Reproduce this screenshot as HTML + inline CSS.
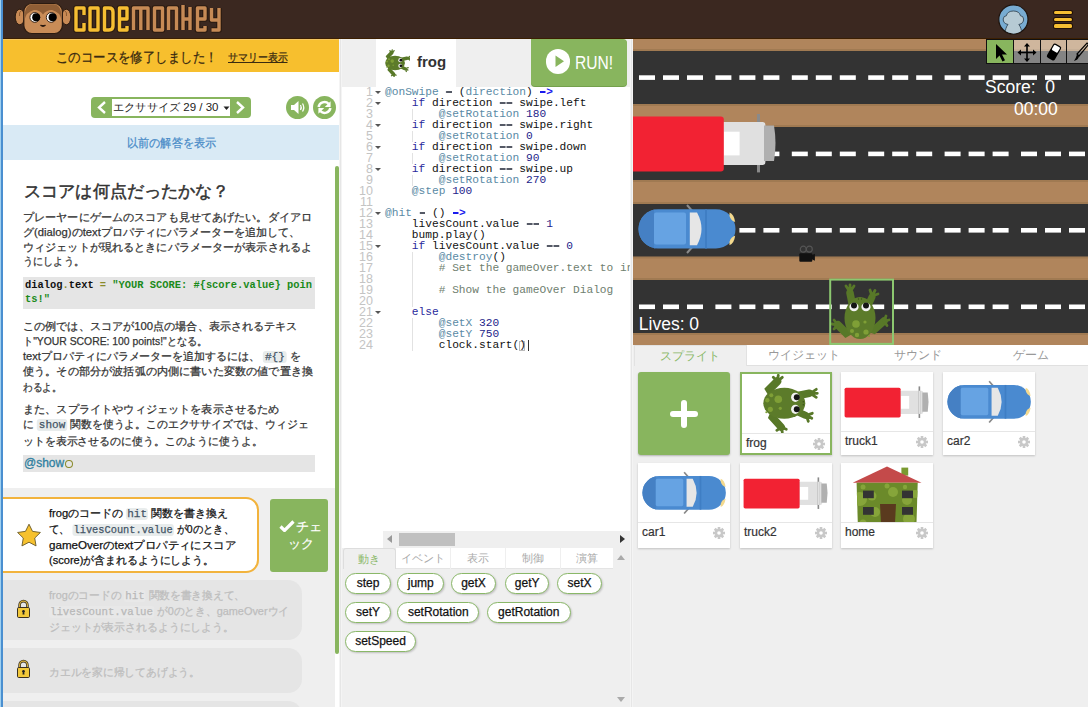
<!DOCTYPE html>
<html><head><meta charset="utf-8">
<style>
*{margin:0;padding:0;box-sizing:border-box}
html,body{width:1088px;height:707px;overflow:hidden;background:#efefef;font-family:"Liberation Sans",sans-serif;position:relative}
.a{position:absolute}
#hdr{left:0;top:0;width:1088px;height:39px;background:#3b2820;border-bottom:1px solid #3c1f02}
/* left panel */
#lp{left:0;top:39px;width:339px;height:668px;background:#fff;overflow:hidden}
#lborder{left:0;top:0;width:3px;height:707px;background:#4a8fd0;border-left:1px solid #9fd0f0;z-index:5}
#banner{left:3px;top:0;width:336px;height:33px;background:#f7bf2e;border-top:1px solid #f4c660;color:#3a2a10;font-size:14px;text-align:center;line-height:33px}
#banner u{font-size:11px;margin-left:8px}
#nav{left:91px;top:58px;width:160px;height:21px;border-radius:4px;background:#88b55e}
#nav .sel{position:absolute;left:21px;top:2px;width:118px;height:17px;background:#fff;font-size:11.3px;line-height:17px;color:#222;padding-left:1px;white-space:nowrap}
.circ{position:absolute;width:23px;height:23px;border-radius:50%;background:#88b55e}
#prev{left:3px;top:86px;width:336px;height:35px;background:#d9eaf5;color:#4a8cc8;font-size:12px;text-align:center;line-height:35px}
#content{left:3px;top:121px;width:332px;height:328px;background:#fff}
.ttl{left:24px;top:142px;font-size:17px;color:#333;white-space:nowrap}
.p{left:24px;width:292px;font-size:11.6px;color:#333;line-height:14.7px}
.cb{left:23px;width:292px;word-break:break-all;background:#e5e5e5;font-family:"Liberation Mono",monospace;font-weight:bold;font-size:10.4px;line-height:14.3px;padding:1px 0 0 2px}
.ic{background:#e8ecec;color:#456;font-family:"Liberation Mono",monospace;border-radius:3px;padding:0 2px}
#tasks{left:3px;top:449px;width:332px;height:219px;background:#efefef}
#scrl{left:335px;top:127px;width:4px;height:541px;background:#fff}
#thumb{left:335px;top:127px;width:4px;height:488px;background:#88b55e;border-radius:2px}
/* dividers */
#d1{left:339px;top:39px;width:3px;height:668px;background:#e6e6e6;border-left:1px solid #f4f4f4;border-right:1px solid #f4f4f4}
#d2{left:630px;top:39px;width:3px;height:668px;background:#e6e6e6;border-left:1px solid #f4f4f4;border-right:1px solid #f4f4f4}
/* middle */
#mp{left:342px;top:39px;width:288px;height:668px;background:#fff;overflow:hidden}
#code{font-family:"Liberation Mono",monospace;font-size:11.2px;line-height:11px;white-space:pre}
.ln{color:#bbb}
/* right */
#rp{left:633px;top:39px;width:455px;height:668px;background:#efefef;overflow:hidden}
#tb{left:353.4px;top:0;width:110px;height:25.4px}
.tbb{position:absolute;top:0;width:27.6px;height:25.4px;background:rgba(255,255,255,0.4);border:1px solid #111}
.tbb svg{position:absolute;left:0;top:0}
.tab{top:306px;height:21.4px;background:#fff;color:#999;font-size:11.5px;text-align:center;line-height:21px;border-bottom:1px solid #e0e0e0}
.card{width:92px;background:#fff;box-shadow:0 1px 2px rgba(0,0,0,.2);overflow:hidden}
.card svg{display:block}
.cl{left:0;width:92px;height:1px;background:#e6e6e6}
.cn{left:4px;font-size:12px;color:#333;line-height:20px;margin-top:-2px;-webkit-text-stroke:0.2px #333}
#run{left:189px;top:0.4px;width:95.8px;height:47px;background:#88b55e;border-radius:0 4px 4px 4px;box-shadow:0 1px 0 #74a04c}
#gut{left:13px;top:48px;width:18px;text-align:right;font-family:"Liberation Sans",sans-serif;font-size:12.5px;line-height:11px;color:#c4c4c4}
.gl{height:11px}
.fold{left:33px;margin-top:52px;width:0;height:0;border-left:3px solid transparent;border-right:3px solid transparent;border-top:3px solid #555}
#code{left:43px;top:48px;font-family:"Liberation Mono",monospace;font-size:11.2px;line-height:11px;white-space:pre;color:#111}
.cl2{height:11px}
.k1{color:#5a8aa5}.kw{color:#2a2a9c}.op{color:transparent;background:linear-gradient(to right,#555a66 0,#555a66 80%,transparent 80%) repeat-x 0.8px 5px/6.72px 2.2px}.ar{color:#1a1aee;font-weight:bold}.dsh{color:transparent;background:linear-gradient(#1a1aee,#1a1aee) no-repeat 1px 5px/5.5px 2.2px}.nm{color:#24248a}.cm{color:#6f806f}
.ptab{top:509px;height:21.4px;background:#fff;color:#aaa;font-size:11px;text-align:center;line-height:21px;border-bottom:1px solid #e4e4e4}
.pill{-webkit-text-stroke:0.25px #111;height:21px;border:1.3px solid #8ab868;border-radius:11px;background:#fff;color:#111;font-size:12px;text-align:center;line-height:18.5px;box-shadow:1px 1px 2px rgba(0,0,0,.2)}
.tk{font-size:11.6px;line-height:15.8px}
.ic2{background:#e8ecec;color:#456;font-family:"Liberation Mono",monospace;font-size:11px;border-radius:3px;padding:0 1px}
.ic3{background:#e8e8e8;color:#b8b8b8;font-family:"Liberation Mono",monospace;font-size:11px;border-radius:3px;padding:0 1px}
.ln2{position:absolute;white-space:nowrap;line-height:16px;font-size:11.2px;color:#333;transform-origin:0 50%;-webkit-text-stroke:0.25px currentColor}
</style></head><body>
<div id="hdr" class="a">
<svg class="a" style="left:13px;top:2px" width="60" height="34" viewBox="13 2 60 34">
<ellipse cx="19.8" cy="17" rx="4.6" ry="7.8" fill="#c88a55" stroke="#2a1a10" stroke-width="1"/>
<ellipse cx="66.3" cy="17" rx="4.6" ry="7.8" fill="#c88a55" stroke="#2a1a10" stroke-width="1"/>
<path d="M19.5,16 Q19,12 21,11 M66.5,16 Q67,12 65,11" stroke="#8a5a30" stroke-width="1" fill="none"/>
<rect x="23.8" y="3.5" width="38.6" height="30" rx="8" fill="#c98c57" stroke="#2a1a10" stroke-width="1.2"/>
<path d="M24.5,20 Q24,5 32,4.2 H54 Q62,5 61.7,20 Q60,12 52,10 Q46,10 43,14.5 Q40,10 34,10 Q26,12 24.5,20Z" fill="#8f5e36"/>
<circle cx="34.8" cy="17.4" r="4.9" fill="#fff" stroke="#2a1a10" stroke-width="0.9"/>
<circle cx="51.2" cy="17.4" r="4.9" fill="#fff" stroke="#2a1a10" stroke-width="0.9"/>
<circle cx="36.2" cy="17.2" r="4" fill="#000"/><circle cx="52.6" cy="17.2" r="4" fill="#000"/>
<path d="M40.5,25 Q43,27.5 45.5,25" stroke="#2a1a10" stroke-width="1.3" fill="#2a1a10"/>
</svg>
<svg class="a" style="left:72px;top:4px" width="152" height="31" viewBox="72 4 152 31">
<g fill="none" stroke-linejoin="round" stroke-linecap="butt">
<g stroke="#2a1a10" stroke-width="5.6">
<path d="M84,15 V8 H76 V30 H84 V23"/>
<path d="M90,8 H98 V30 H90Z"/>
<path d="M104.5,8 H109 Q113,8 113,12 V26 Q113,30 109,30 H104.5Z"/>
<path d="M127,26 V30 H119.5 V8 H127 V19 H120"/>
<path d="M133.5,30 V8 H148 V30 M140.8,8 V30"/>
<path d="M154.5,8 H162.5 V30 H154.5Z"/>
<path d="M168.5,30 V8 H176.5 V30"/>
<path d="M183,5 V30 M183,19 H190 V30 M183,19 H190 V14 V7"/>
<path d="M205,26 V30 H197.5 V8 H205 V19 H198"/>
<path d="M211.5,8 V20 H219 V8 M219,20 V30 H211.5"/>
</g>
<g stroke="#f6be32" stroke-width="3.4">
<path d="M84,15 V8 H76 V30 H84 V23"/>
<path d="M90,8 H98 V30 H90Z"/>
<path d="M104.5,8 H109 Q113,8 113,12 V26 Q113,30 109,30 H104.5Z"/>
<path d="M127,26 V30 H119.5 V8 H127 V19 H120"/>
</g>
<g stroke="#c68a55" stroke-width="3.4">
<path d="M133.5,30 V8 H148 V30 M140.8,8 V30"/>
<path d="M154.5,8 H162.5 V30 H154.5Z"/>
<path d="M168.5,30 V8 H176.5 V30"/>
<path d="M183,5 V30 M183,19 H190 V30 M183,19 H190 V14 V7"/>
<path d="M205,26 V30 H197.5 V8 H205 V19 H198"/>
<path d="M211.5,8 V20 H219 V8 M219,20 V30 H211.5"/>
</g></g>
</svg>
<svg class="a" style="left:998px;top:4px" width="32" height="32" viewBox="998 4 32 32">
<defs><clipPath id="avc"><circle cx="1013.4" cy="19.4" r="14"/></clipPath></defs>
<circle cx="1013.4" cy="19.4" r="14.6" fill="#78acd2" stroke="#1e140e" stroke-width="1.2"/>
<g clip-path="url(#avc)"><path d="M1004.5,36 Q1005.5,27 1008,24.5 Q1003,23.5 1003.2,19 Q1003.5,15.8 1006.3,15.8 Q1007.5,11 1013.4,11 Q1019.3,11 1020.5,15.8 Q1023.3,15.8 1023.6,19 Q1023.8,23.5 1018.8,24.5 Q1021.3,27 1022.3,36Z" fill="#b6cad4" stroke="#2a3a48" stroke-width="0.8"/></g>
</svg>
<div class="a" style="left:1053.5px;top:11px;width:18px;height:3.4px;background:#f6be32;border-radius:1.5px;box-shadow:0 0 0 1px #201008"></div>
<div class="a" style="left:1053.5px;top:17.7px;width:18px;height:3.4px;background:#f6be32;border-radius:1.5px;box-shadow:0 0 0 1px #201008"></div>
<div class="a" style="left:1053.5px;top:24.4px;width:18px;height:3.4px;background:#f6be32;border-radius:1.5px;box-shadow:0 0 0 1px #201008"></div>
</div>
<div id="lborder" class="a"></div>
<div id="lp" class="a">
  <div id="banner" class="a"></div>
  <div id="prev" class="a"></div>
  <div id="nav" class="a"><svg class="a" style="left:4px;top:3px" width="14" height="15" viewBox="0 0 14 15"><path d="M10,2 L4,7.5 L10,13" fill="none" stroke="#fff" stroke-width="2.4"/></svg><div class="sel"><span id="nv" style="display:inline-block;transform-origin:0 50%;white-space:nowrap">エクササイズ 29 / 30</span></div><svg class="a" style="left:132px;top:9px" width="7" height="5"><path d="M0.5,0.5 H6.5 L3.5,4Z" fill="#222"/></svg><svg class="a" style="left:142px;top:3px" width="14" height="15" viewBox="0 0 14 15"><path d="M4,2 L10,7.5 L4,13" fill="none" stroke="#fff" stroke-width="2.4"/></svg></div>
  <div class="circ" style="left:286px;top:57px"><svg width="23" height="23" viewBox="0 0 23 23"><path d="M5,9 H8 L12.5,5 V18 L8,14 H5Z" fill="#fff"/><path d="M14.5,9 Q16,11.5 14.5,14 M16.5,7.5 Q19,11.5 16.5,15.5" fill="none" stroke="#fff" stroke-width="1.3"/></svg></div>
  <div class="circ" style="left:312.6px;top:57px"><svg width="23" height="23" viewBox="0 0 23 23"><path d="M5.6,11 A5.9,5.9 0 0 1 15.6,7.8" fill="none" stroke="#fff" stroke-width="2.5"/><path d="M17.4,12 A5.9,5.9 0 0 1 7.4,15.2" fill="none" stroke="#fff" stroke-width="2.5"/><path d="M17.6,5.2 V11 H11.8Z M5.4,17.8 V12 H11.2Z" fill="#fff"/></svg></div>
  <div class="cb a" style="top:237.8px;height:31.8px"><div class="mono" style="white-space:nowrap"><span style="color:#111">dialog</span><span style="color:#8a8a2a">.</span><span style="color:#111">text </span><span style="color:#8a8a2a">=</span><span style="color:#1a8a1a"> "YOUR SCORE: #{score.value} poin</span></div><div class="mono" style="white-space:nowrap;color:#1a8a1a">ts!"</div></div>
  <div class="cb a" style="top:416px;height:16.5px;font-weight:normal;font-family:'Liberation Sans',sans-serif;font-size:12px;line-height:15px;padding-left:1px"><span style="color:#2f7f9f;-webkit-text-stroke:0.3px #2f7f9f">@show</span><span style="display:inline-block;width:8px;height:8.5px;border:1.6px solid #8a8a2a;border-radius:50%;vertical-align:-1px;margin-left:0.5px"></span></div>

  <div class="a" style="left:3px;top:449px;width:332px;height:219px;background:#efefef"></div>
  <div class="a" style="left:-10px;top:458px;width:269px;height:76.4px;background:#fff;border:2px solid #f2b33d;border-radius:13px"></div>
  <svg class="a" style="left:15.85px;top:484px" width="26" height="26" viewBox="0 0 26 26"><path d="M13.00,1.20 L16.53,8.35 L24.41,9.49 L18.71,15.05 L20.05,22.91 L13.00,19.20 L5.95,22.91 L7.29,15.05 L1.59,9.49 L9.47,8.35Z" fill="#f6c12e" stroke="#6a5a2a" stroke-width="0.9" stroke-linejoin="round"/></svg>
  <div class="a" style="left:270.2px;top:460px;width:58px;height:72.7px;background:#88b55e;border-radius:3px"></div>
  <svg class="a" style="left:279px;top:481px" width="16" height="12" viewBox="0 0 16 12"><path d="M1.5,6.5 L5.5,10.5 L14.5,1.5" fill="none" stroke="#fff" stroke-width="3.2" stroke-linejoin="miter"/></svg>
  <div class="a" style="left:296px;top:480px;color:#fff;font-size:13px;line-height:16px;white-space:nowrap;-webkit-text-stroke:0.2px #fff">チェ</div>
  <div class="a" style="left:288px;top:496.5px;color:#fff;font-size:13px;line-height:16px;white-space:nowrap;-webkit-text-stroke:0.2px #fff">ック</div>
  <div class="a" style="left:-10px;top:541px;width:311.6px;height:60.3px;background:#e5e5e5;border-radius:14px"></div>
  <div class="a" style="left:-10px;top:609px;width:311.6px;height:45.4px;background:#e5e5e5;border-radius:14px"></div>
  <div class="a" style="left:-10px;top:662px;width:311.6px;height:45.4px;background:#e5e5e5;border-radius:14px"></div>
  <svg class="a lock" style="left:16px;top:560px" width="15" height="20" viewBox="0 0 15 20"><path d="M3.6,9 V6 A3.9,3.9 0 0 1 11.4,6 V9" fill="none" stroke="#3a3020" stroke-width="2.6"/><path d="M3.6,9 V6 A3.9,3.9 0 0 1 11.4,6 V9" fill="none" stroke="#d8b040" stroke-width="1.1"/><rect x="1.5" y="8.5" width="12" height="10" rx="1.2" fill="#f2c83a" stroke="#3a3020" stroke-width="1"/><circle cx="7.5" cy="12.3" r="1.3" fill="#222"/><path d="M6.9,12.5 H8.1 L8.5,15.5 H6.5Z" fill="#222"/></svg>
  <svg class="a lock" style="left:16px;top:620px" width="15" height="20" viewBox="0 0 15 20"><path d="M3.6,9 V6 A3.9,3.9 0 0 1 11.4,6 V9" fill="none" stroke="#3a3020" stroke-width="2.6"/><path d="M3.6,9 V6 A3.9,3.9 0 0 1 11.4,6 V9" fill="none" stroke="#d8b040" stroke-width="1.1"/><rect x="1.5" y="8.5" width="12" height="10" rx="1.2" fill="#f2c83a" stroke="#3a3020" stroke-width="1"/><circle cx="7.5" cy="12.3" r="1.3" fill="#222"/><path d="M6.9,12.5 H8.1 L8.5,15.5 H6.5Z" fill="#222"/></svg>

  <div id="scrl" class="a"></div>
  <div id="thumb" class="a"></div>
</div>
<div id="d1" class="a"></div>
<div class="a" style="left:0;top:0;width:335px;height:707px;overflow:hidden">
<div class="ln2" id="t0" style="left:24px;-webkit-text-stroke:0.5px #333;top:183.6px;font-size:17px;color:#333;transform:scaleX(1.007)">スコアは何点だったかな？</div>
<div class="ln2" id="p1a" style="left:22.8px;top:209.3px;transform:scaleX(1.010)">プレーヤーにゲームのスコアも見せてあげたい。ダイアロ</div>
<div class="ln2" id="p1b" style="left:22.8px;top:223.9px;transform:scaleX(1.006)">グ(dialog)のtextプロパティにパラメーターを追加して、</div>
<div class="ln2" id="p1c" style="left:22.8px;top:238.5px;transform:scaleX(1.010)">ウィジェットが現れるときにパラメーターが表示されるよ</div>
<div class="ln2" id="p1d" style="left:22.8px;top:253.2px;transform:scaleX(0.924)">うにしよう。</div>
<div class="ln2" id="p2a" style="left:22.8px;top:317.6px;transform:scaleX(1.011)">この例では、スコアが100点の場合、表示されるテキス</div>
<div class="ln2" id="p2b" style="left:22.8px;top:332.6px;transform:scaleX(0.927)">ト"YOUR SCORE: 100 points!"となる。</div>
<div class="ln2" id="p2c" style="left:22.8px;top:347.7px;transform:scaleX(0.995)">textプロパティにパラメーターを追加するには、 <span class="ic">#{}</span> を</div>
<div class="ln2" id="p2d" style="left:22.8px;top:363.3px;transform:scaleX(1.014)">使う。その部分が波括弧の内側に書いた変数の値で置き換</div>
<div class="ln2" id="p2e" style="left:22.8px;top:378.9px;transform:scaleX(0.875)">わるよ。</div>
<div class="ln2" id="p3a" style="left:22.8px;top:400.6px;transform:scaleX(1.014)">また、スプライトやウィジェットを表示させるため</div>
<div class="ln2" id="p3b" style="left:22.8px;top:416.4px;transform:scaleX(0.984)">に <span class="ic">show</span> 関数を使うよ。このエクササイズでは、ウィジェ</div>
<div class="ln2" id="p3c" style="left:22.8px;top:432.8px;transform:scaleX(0.991)">ットを表示させるのに使う。このように使うよ。</div>
<div class="ln2" id="k1a" style="left:49px;top:505.1px;color:#111;transform:scaleX(0.998)">frogのコードの <span class="ic2">hit</span> 関数を書き換え</div>
<div class="ln2" id="k1b" style="left:49px;top:521.2px;color:#111;transform:scaleX(0.939)">て、 <span class="ic2">livesCount.value</span> が0のとき、</div>
<div class="ln2" id="k1c" style="left:49px;top:537.4px;color:#111;transform:scaleX(1.037)">gameOverのtextプロパティにスコア</div>
<div class="ln2" id="k1d" style="left:49px;top:551.8px;color:#111;transform:scaleX(0.989)">(score)が含まれるようにしよう。</div>
<div class="ln2" id="k2a" style="left:49px;top:587.0px;color:#bdbdbd;transform:scaleX(0.974)">frogのコードの <span class="ic3">hit</span> 関数を書き換えて、</div>
<div class="ln2" id="k2b" style="left:49px;top:602.8px;color:#bdbdbd;transform:scaleX(0.975)"><span class="ic3">livesCount.value</span> が0のとき、gameOverウイ</div>
<div class="ln2" id="k2c" style="left:49px;top:619.2px;color:#bdbdbd;transform:scaleX(0.989)">ジェットが表示されるようにしよう。</div>
<div class="ln2" id="k3a" style="left:49px;top:663.6px;color:#bdbdbd;transform:scaleX(0.981)">カエルを家に帰してあげよう。</div>
<div class="ln2" id="b0" style="left:55.6px;top:49.0px;font-size:14px;color:#3a2a10;transform:scaleX(0.887)">このコースを修了しました！</div>
<div class="ln2" id="b1" style="left:227.5px;top:49.0px;font-size:11px;color:#3a2a10;transform:scaleX(0.902)"><u>サマリー表示</u></div>
<div class="ln2" id="pv" style="left:126.6px;top:135.0px;font-size:12px;color:#4a8cc8;transform:scaleX(0.927)">以前の解答を表示</div>
</div>

<div id="mp" class="a">
<div class="a" style="left:0;top:0;width:288px;height:48px;background:#efefef"></div>
<div class="a" style="left:34px;top:0;width:80px;height:48px;background:#fff"></div>
<svg class="a" style="left:40px;top:9.5px" width="28" height="28" viewBox="-14 -14 28 28"><g transform="rotate(90) scale(0.47)"><g stroke="#587828" stroke-linecap="round" fill="none">
<path d="M-7,-8 L-10,-23" stroke-width="7.5"/><path d="M-10,-24 L-14,-30 M-10,-24 L-10,-31 M-10,-24 L-6,-30" stroke-width="2.8"/>
<path d="M7,-8 L12,-19" stroke-width="7"/><path d="M12,-20 L10,-26 M12,-20 L15,-25.5 M12,-20 L18,-22" stroke-width="2.8"/>
<path d="M-9,14 L-14,17 L-22,9" stroke-width="8"/><path d="M-22,9 L-28,8 M-22,9 L-26,4 M-22,9 L-26,13" stroke-width="2.8"/>
<path d="M9,12 L14,14 L24,5" stroke-width="7.5"/><path d="M24,5 L29,4 M24,5 L27,9.5 M24,5 L26,0" stroke-width="2.8"/>
</g>
<ellipse cx="0" cy="2" rx="15.5" ry="21" fill="#5c7b2a"/>
<circle cx="-4" cy="8" r="3.8" fill="#7f9f36"/><circle cx="6" cy="16" r="2.6" fill="#7f9f36"/><circle cx="-8" cy="15" r="2" fill="#7f9f36"/><circle cx="5" cy="6" r="1.6" fill="#7f9f36"/><circle cx="-3" cy="19" r="2.2" fill="#7f9f36"/><circle cx="9" cy="20" r="1" fill="#7f9f36"/>
<ellipse cx="-6" cy="-9" rx="4.6" ry="4.2" fill="#f2f2f2"/><ellipse cx="6" cy="-9" rx="4.6" ry="4.2" fill="#f2f2f2"/>
<circle cx="-6" cy="-10.5" r="3" fill="#151515"/><circle cx="6" cy="-10.5" r="3" fill="#151515"/>
<circle cx="-1.5" cy="-17" r="0.7" fill="#3a5018"/><circle cx="1.5" cy="-17" r="0.7" fill="#3a5018"/></g></svg>
<div class="a" style="left:75px;top:14px;font-size:15px;font-weight:bold;color:#333">frog</div>
<div id="run" class="a"><div class="a" style="left:14.5px;top:10px;width:24.5px;height:24.5px;border-radius:50%;background:#fff"></div><svg class="a" style="left:14.5px;top:10px" width="25" height="25" viewBox="0 0 25 25"><path d="M9.5,6.5 L18,12.25 L9.5,18Z" fill="#88b55e"/></svg><div class="a" style="left:44px;top:13px;font-size:19px;color:#fff;transform:scaleX(0.82);transform-origin:0 0;white-space:nowrap">RUN!</div></div>
<div class="a" style="left:0;top:48px;width:288px;height:444px;background:#fff"></div>
<div id="gut" class="a"><div class="gl">1</div><div class="gl">2</div><div class="gl">3</div><div class="gl">4</div><div class="gl">5</div><div class="gl">6</div><div class="gl">7</div><div class="gl">8</div><div class="gl">9</div><div class="gl">10</div><div class="gl">11</div><div class="gl">12</div><div class="gl">13</div><div class="gl">14</div><div class="gl">15</div><div class="gl">16</div><div class="gl">17</div><div class="gl">18</div><div class="gl">19</div><div class="gl">20</div><div class="gl">21</div><div class="gl">22</div><div class="gl">23</div><div class="gl">24</div></div>
<div class="fold a" style="top:0px"></div><div class="fold a" style="top:11px"></div><div class="fold a" style="top:33px"></div><div class="fold a" style="top:55px"></div><div class="fold a" style="top:77px"></div><div class="fold a" style="top:121px"></div><div class="fold a" style="top:154px"></div><div class="fold a" style="top:220px"></div>
<div class="a" style="left:69.5px;top:70px;width:1px;height:11px;background:#e2e2e2"></div><div class="a" style="left:69.5px;top:92px;width:1px;height:11px;background:#e2e2e2"></div><div class="a" style="left:69.5px;top:114px;width:1px;height:11px;background:#e2e2e2"></div><div class="a" style="left:69.5px;top:136px;width:1px;height:11px;background:#e2e2e2"></div><div class="a" style="left:69.5px;top:213px;width:1px;height:55px;background:#e2e2e2"></div><div class="a" style="left:69.5px;top:279px;width:1px;height:33px;background:#e2e2e2"></div>
<div class="a" style="left:185.5px;top:301px;width:1px;height:11px;background:#333"></div><div class="a" style="left:176.5px;top:302px;width:6.5px;height:10px;border:1px solid #bbb"></div><div id="code" class="a mono"><div class="cl2"><span class="k1">@onSwipe</span> <span class="op">-</span> (<span class="k1">direction</span>) <span class="ar"><span class="dsh">-</span>&gt;</span></div><div class="cl2">    <span class="kw">if</span> direction <span class="op">--</span> swipe.left</div><div class="cl2">        <span class="k1">@setRotation</span> <span class="nm">180</span></div><div class="cl2">    <span class="kw">if</span> direction <span class="op">--</span> swipe.right</div><div class="cl2">        <span class="k1">@setRotation</span> <span class="nm">0</span></div><div class="cl2">    <span class="kw">if</span> direction <span class="op">--</span> swipe.down</div><div class="cl2">        <span class="k1">@setRotation</span> <span class="nm">90</span></div><div class="cl2">    <span class="kw">if</span> direction <span class="op">--</span> swipe.up</div><div class="cl2">        <span class="k1">@setRotation</span> <span class="nm">270</span></div><div class="cl2">    <span class="k1">@step</span> <span class="nm">100</span></div><div class="cl2"> </div><div class="cl2"><span class="k1">@hit</span> <span class="op">-</span> () <span class="ar"><span class="dsh">-</span>&gt;</span></div><div class="cl2">    livesCount.value <span class="op">--</span> <span class="nm">1</span></div><div class="cl2">    bump.play()</div><div class="cl2">    <span class="kw">if</span> livesCount.value <span class="op">--</span> <span class="nm">0</span></div><div class="cl2">        <span class="k1">@destroy</span>()</div><div class="cl2">        <span class="cm"># Set the gameOver.text to include the score</span></div><div class="cl2"> </div><div class="cl2">        <span class="cm"># Show the gameOver Dialog</span></div><div class="cl2"> </div><div class="cl2">    <span class="kw">else</span></div><div class="cl2">        <span class="k1">@setX</span> <span class="nm">320</span></div><div class="cl2">        <span class="k1">@setY</span> <span class="nm">750</span></div><div class="cl2">        clock.start()</div></div>
<div class="a" style="left:40.5px;top:492px;width:247.5px;height:16.7px;background:#efefef"></div>
<svg class="a" style="left:44px;top:495px" width="8" height="10"><path d="M6,1 L1,5 L6,9Z" fill="#999"/></svg>
<div class="a" style="left:57px;top:494px;width:56px;height:12.6px;background:#c0c0c0"></div>
<svg class="a" style="left:276px;top:495px" width="8" height="10"><path d="M2,1 L7,5 L2,9Z" fill="#333"/></svg>
<div class="a" style="left:0;top:508.7px;width:288px;height:160px;background:#efefef"></div>
<div class="ptab a" style="left:0.8px;width:52.8px;background:#efefef;color:#8ab868;border:1px solid #ddd;border-bottom:none;border-radius:3px 3px 0 0">動き</div>
<div class="ptab a" style="left:53.6px;width:54px">イベント</div>
<div class="ptab a" style="left:108.6px;width:54px">表示</div>
<div class="ptab a" style="left:163.6px;width:54px">制御</div>
<div class="ptab a" style="left:218.6px;width:52.4px">演算</div>
<svg class="a" style="left:274px;top:514px" width="10" height="8"><path d="M1,7 L5,2 L9,7Z" fill="#aaa"/></svg>
<svg class="a" style="left:274px;top:657px" width="10" height="8"><path d="M1,1 L5,6 L9,1Z" fill="#aaa"/></svg>
<div class="pill a" style="left:3.3px;top:534.3px;width:45.5px">step</div><div class="pill a" style="left:55.3px;top:534.3px;width:46.9px">jump</div><div class="pill a" style="left:109.0px;top:534.3px;width:45.0px">getX</div><div class="pill a" style="left:163.3px;top:534.3px;width:43.7px">getY</div><div class="pill a" style="left:215.2px;top:534.3px;width:44.6px">setX</div><div class="pill a" style="left:3.3px;top:563.4px;width:45.4px">setY</div><div class="pill a" style="left:55.3px;top:563.4px;width:82.0px">setRotation</div><div class="pill a" style="left:145.0px;top:563.4px;width:83.6px">getRotation</div><div class="pill a" style="left:3.3px;top:591.6px;width:70.4px">setSpeed</div>
</div>
<div id="d2" class="a"></div>
<div id="rp" class="a">
<svg class="a" style="left:0;top:0" width="455" height="306" viewBox="0 0 455 306">
<rect width="455" height="306" fill="#b0855c"/>
<g fill="#a07a52"><rect y="10" width="455" height="2"/><rect y="65" width="455" height="2"/><rect y="86" width="455" height="2"/><rect y="141" width="455" height="2"/><rect y="163" width="455" height="2"/><rect y="217.5" width="455" height="2"/><rect y="239" width="455" height="2"/><rect y="294" width="455" height="2"/></g><g fill="#333"><rect y="12" width="455" height="53"/><rect y="88" width="455" height="53"/><rect y="165" width="455" height="52.5"/><rect y="241" width="455" height="53"/></g>
<g fill="#fff"><rect x="6.0" y="36.3" width="16" height="4.6"/><rect x="30.0" y="36.3" width="16" height="4.6"/><rect x="54.0" y="36.3" width="16" height="4.6"/><rect x="82.4" y="36.3" width="16" height="4.6"/><rect x="106.4" y="36.3" width="16" height="4.6"/><rect x="130.4" y="36.3" width="16" height="4.6"/><rect x="158.8" y="36.3" width="16" height="4.6"/><rect x="182.8" y="36.3" width="16" height="4.6"/><rect x="206.8" y="36.3" width="16" height="4.6"/><rect x="235.2" y="36.3" width="16" height="4.6"/><rect x="259.2" y="36.3" width="16" height="4.6"/><rect x="283.2" y="36.3" width="16" height="4.6"/><rect x="311.6" y="36.3" width="16" height="4.6"/><rect x="335.6" y="36.3" width="16" height="4.6"/><rect x="359.6" y="36.3" width="16" height="4.6"/><rect x="388.0" y="36.3" width="16" height="4.6"/><rect x="412.0" y="36.3" width="16" height="4.6"/><rect x="436.0" y="36.3" width="16" height="4.6"/><rect x="6.0" y="112.6" width="16" height="4.6"/><rect x="30.0" y="112.6" width="16" height="4.6"/><rect x="54.0" y="112.6" width="16" height="4.6"/><rect x="82.4" y="112.6" width="16" height="4.6"/><rect x="106.4" y="112.6" width="16" height="4.6"/><rect x="130.4" y="112.6" width="16" height="4.6"/><rect x="158.8" y="112.6" width="16" height="4.6"/><rect x="182.8" y="112.6" width="16" height="4.6"/><rect x="206.8" y="112.6" width="16" height="4.6"/><rect x="235.2" y="112.6" width="16" height="4.6"/><rect x="259.2" y="112.6" width="16" height="4.6"/><rect x="283.2" y="112.6" width="16" height="4.6"/><rect x="311.6" y="112.6" width="16" height="4.6"/><rect x="335.6" y="112.6" width="16" height="4.6"/><rect x="359.6" y="112.6" width="16" height="4.6"/><rect x="388.0" y="112.6" width="16" height="4.6"/><rect x="412.0" y="112.6" width="16" height="4.6"/><rect x="436.0" y="112.6" width="16" height="4.6"/><rect x="6.0" y="189" width="16" height="4.6"/><rect x="30.0" y="189" width="16" height="4.6"/><rect x="54.0" y="189" width="16" height="4.6"/><rect x="82.4" y="189" width="16" height="4.6"/><rect x="106.4" y="189" width="16" height="4.6"/><rect x="130.4" y="189" width="16" height="4.6"/><rect x="158.8" y="189" width="16" height="4.6"/><rect x="182.8" y="189" width="16" height="4.6"/><rect x="206.8" y="189" width="16" height="4.6"/><rect x="235.2" y="189" width="16" height="4.6"/><rect x="259.2" y="189" width="16" height="4.6"/><rect x="283.2" y="189" width="16" height="4.6"/><rect x="311.6" y="189" width="16" height="4.6"/><rect x="335.6" y="189" width="16" height="4.6"/><rect x="359.6" y="189" width="16" height="4.6"/><rect x="388.0" y="189" width="16" height="4.6"/><rect x="412.0" y="189" width="16" height="4.6"/><rect x="436.0" y="189" width="16" height="4.6"/><rect x="6.0" y="265.5" width="16" height="4.6"/><rect x="30.0" y="265.5" width="16" height="4.6"/><rect x="54.0" y="265.5" width="16" height="4.6"/><rect x="82.4" y="265.5" width="16" height="4.6"/><rect x="106.4" y="265.5" width="16" height="4.6"/><rect x="130.4" y="265.5" width="16" height="4.6"/><rect x="158.8" y="265.5" width="16" height="4.6"/><rect x="182.8" y="265.5" width="16" height="4.6"/><rect x="206.8" y="265.5" width="16" height="4.6"/><rect x="235.2" y="265.5" width="16" height="4.6"/><rect x="259.2" y="265.5" width="16" height="4.6"/><rect x="283.2" y="265.5" width="16" height="4.6"/><rect x="311.6" y="265.5" width="16" height="4.6"/><rect x="335.6" y="265.5" width="16" height="4.6"/><rect x="359.6" y="265.5" width="16" height="4.6"/><rect x="388.0" y="265.5" width="16" height="4.6"/><rect x="412.0" y="265.5" width="16" height="4.6"/><rect x="436.0" y="265.5" width="16" height="4.6"/></g>
<g transform="translate(0,0) scale(1)">
<rect x="88" y="83" width="44.4" height="43" rx="3" fill="#e0e0e0"/>
<rect x="91" y="92.7" width="15.6" height="23.7" fill="#fff"/>
<rect x="124" y="75" width="3" height="58.4" fill="#8a8a8a"/>
<rect x="124" y="83" width="3" height="43" fill="#e0e0e0"/>
<path d="M131,86.5 H141 Q144,104 141,122 H131Z" fill="#b0b0b0"/>
<rect x="-13" y="77.4" width="103.8" height="55" rx="3" fill="#f22233"/>
</g>
<g transform="translate(0,0) scale(1)">
<path d="M54,166 L61,174 M54,214 L61,206" stroke="#8a8a8a" stroke-width="2"/>
<rect x="5.5" y="170.3" width="97" height="39.2" rx="19.6" fill="#4a8ad0"/>
<path d="M25.1,170.3 A19.6,19.6 0 0 0 25.1,209.5 H21 V170.3Z" fill="#4580c4"/>
<rect x="21" y="173.6" width="32" height="32" rx="2" fill="#66a3e3"/>
<path d="M56.8,173.6 H64 Q73,189.9 64,206.2 H56.8Z" fill="#e6e6e6"/>
<rect x="72" y="170.3" width="2" height="39.2" fill="#3f7ec4"/>
<path d="M96.5,173.5 Q101,175 102.2,183 Q98,182 96.5,177Z" fill="#f3d98e"/>
<path d="M96.5,206.3 Q101,204.8 102.2,196.8 Q98,197.8 96.5,202.8Z" fill="#f3d98e"/>
</g>
<g transform="translate(166.3,207.2)"><circle cx="4" cy="3" r="3" fill="none" stroke="#555" stroke-width="1.2"/><circle cx="10" cy="3" r="3" fill="none" stroke="#555" stroke-width="1.2"/><rect x="0" y="7" width="13" height="8.5" rx="1" fill="#111"/><path d="M12.5,9 L15.6,7.5 V14.5 L12.5,13Z" fill="#111"/></g>
<g transform="translate(227,277) scale(1)"><g stroke="#587828" stroke-linecap="round" fill="none">
<path d="M-7,-8 L-10,-23" stroke-width="7.5"/><path d="M-10,-24 L-14,-30 M-10,-24 L-10,-31 M-10,-24 L-6,-30" stroke-width="2.8"/>
<path d="M7,-8 L12,-19" stroke-width="7"/><path d="M12,-20 L10,-26 M12,-20 L15,-25.5 M12,-20 L18,-22" stroke-width="2.8"/>
<path d="M-9,14 L-14,17 L-22,9" stroke-width="8"/><path d="M-22,9 L-28,8 M-22,9 L-26,4 M-22,9 L-26,13" stroke-width="2.8"/>
<path d="M9,12 L14,14 L24,5" stroke-width="7.5"/><path d="M24,5 L29,4 M24,5 L27,9.5 M24,5 L26,0" stroke-width="2.8"/>
</g>
<ellipse cx="0" cy="2" rx="15.5" ry="21" fill="#5c7b2a"/>
<circle cx="-4" cy="8" r="3.8" fill="#7f9f36"/><circle cx="6" cy="16" r="2.6" fill="#7f9f36"/><circle cx="-8" cy="15" r="2" fill="#7f9f36"/><circle cx="5" cy="6" r="1.6" fill="#7f9f36"/><circle cx="-3" cy="19" r="2.2" fill="#7f9f36"/><circle cx="9" cy="20" r="1" fill="#7f9f36"/>
<ellipse cx="-6" cy="-9" rx="4.6" ry="4.2" fill="#f2f2f2"/><ellipse cx="6" cy="-9" rx="4.6" ry="4.2" fill="#f2f2f2"/>
<circle cx="-6" cy="-10.5" r="3" fill="#151515"/><circle cx="6" cy="-10.5" r="3" fill="#151515"/>
<circle cx="-1.5" cy="-17" r="0.7" fill="#3a5018"/><circle cx="1.5" cy="-17" r="0.7" fill="#3a5018"/></g>
<rect x="197.2" y="240.6" width="62.8" height="64.3" fill="none" stroke="#8cc870" stroke-width="2"/>
<text x="5.8" y="291" font-family="Liberation Sans" font-size="17.5" fill="#fff">Lives:  0</text>
<text x="352" y="54" font-family="Liberation Sans" font-size="17.5" fill="#fff" xml:space="preserve">Score:  0</text>
<text x="381" y="76.3" font-family="Liberation Sans" font-size="17.5" fill="#fff">00:00</text>
</svg>
<div id="tb" class="a">
<div class="tbb" style="left:0;background:#88b55e"><svg width="26" height="24" viewBox="0 0 26 24"><path d="M9,4 L9,19 L12.5,15.5 L15.5,21.5 L18,20.3 L15,14.5 L20,14.5Z" fill="#000"/></svg></div>
<div class="tbb" style="left:26.6px"><svg width="26" height="24" viewBox="0 0 26 24"><g fill="#000"><rect x="12.2" y="5" width="1.6" height="15"/><rect x="5.5" y="11.7" width="15" height="1.6"/><path d="M13,3 L16,6.5 H10Z M13,22 L16,18.5 H10Z M3.5,12.5 L7,9.5 V15.5Z M22.5,12.5 L19,9.5 V15.5Z"/></g></svg></div>
<div class="tbb" style="left:53.2px"><svg width="26" height="24" viewBox="0 0 26 24"><g transform="rotate(30 13 12)"><rect x="8.5" y="4" width="9" height="16" rx="2" fill="#000"/><rect x="9.7" y="5.2" width="6.6" height="6" rx="1" fill="#fff"/></g></svg></div>
<div class="tbb" style="left:79.8px"><svg width="26" height="24" viewBox="0 0 26 24"><path d="M20,3 L21.5,4.5 L12,16 L10,14Z" fill="none" stroke="#000" stroke-width="1.2"/><path d="M10,14.5 L12,16.5 Q11,20 7,21 Q9,18 10,14.5Z" fill="#000"/></svg></div>
</div>
<div class="tab a" style="left:0.8px;width:113px;background:#efefef;color:#8ab868;border:1px solid #e2e2e2;border-bottom:none">スプライト</div>
<div class="tab a" style="left:114px;width:113.7px">ウイジェット</div>
<div class="tab a" style="left:227.7px;width:113.7px">サウンド</div>
<div class="tab a" style="left:341.4px;width:113.6px">ゲーム</div>
<div class="a" style="left:5px;top:333px;width:92px;height:83px;background:#88b55e;border-radius:3px;box-shadow:0 1px 2px rgba(0,0,0,.25)"><div class="a" style="left:32px;top:39px;width:28px;height:6px;background:#fff;border-radius:3px"></div><div class="a" style="left:43px;top:28px;width:6px;height:28px;background:#fff;border-radius:3px"></div></div><div class="card a" style="left:107px;top:333px;height:83px;border:2px solid #88b55e;"><svg class="a" style="left:0;top:0" width="92" height="60" viewBox="0 0 92 60"><g transform="translate(44.3,29.3) rotate(90) scale(1.0)"><g stroke="#587828" stroke-linecap="round" fill="none">
<path d="M-7,-8 L-10,-23" stroke-width="7.5"/><path d="M-10,-24 L-14,-30 M-10,-24 L-10,-31 M-10,-24 L-6,-30" stroke-width="2.8"/>
<path d="M7,-8 L12,-19" stroke-width="7"/><path d="M12,-20 L10,-26 M12,-20 L15,-25.5 M12,-20 L18,-22" stroke-width="2.8"/>
<path d="M-9,14 L-14,17 L-22,9" stroke-width="8"/><path d="M-22,9 L-28,8 M-22,9 L-26,4 M-22,9 L-26,13" stroke-width="2.8"/>
<path d="M9,12 L14,14 L24,5" stroke-width="7.5"/><path d="M24,5 L29,4 M24,5 L27,9.5 M24,5 L26,0" stroke-width="2.8"/>
</g>
<ellipse cx="0" cy="2" rx="15.5" ry="21" fill="#5c7b2a"/>
<circle cx="-4" cy="8" r="3.8" fill="#7f9f36"/><circle cx="6" cy="16" r="2.6" fill="#7f9f36"/><circle cx="-8" cy="15" r="2" fill="#7f9f36"/><circle cx="5" cy="6" r="1.6" fill="#7f9f36"/><circle cx="-3" cy="19" r="2.2" fill="#7f9f36"/><circle cx="9" cy="20" r="1" fill="#7f9f36"/>
<ellipse cx="-6" cy="-9" rx="4.6" ry="4.2" fill="#f2f2f2"/><ellipse cx="6" cy="-9" rx="4.6" ry="4.2" fill="#f2f2f2"/>
<circle cx="-6" cy="-10.5" r="3" fill="#151515"/><circle cx="6" cy="-10.5" r="3" fill="#151515"/>
<circle cx="-1.5" cy="-17" r="0.7" fill="#3a5018"/><circle cx="1.5" cy="-17" r="0.7" fill="#3a5018"/></g></svg><div class="cl a" style="top:59px"></div><div class="cn a" style="top:61px">frog</div><div class="a" style="left:71px;top:63.5px"><svg width="12" height="12" viewBox="-6 -6 12 12"><g fill="#c8c8c8"><circle r="4.2"/><rect x="-1.3" y="-6" width="2.6" height="12"/><rect x="-6" y="-1.3" width="12" height="2.6"/><rect x="-1.3" y="-6" width="2.6" height="12" transform="rotate(45)"/><rect x="-1.3" y="-6" width="2.6" height="12" transform="rotate(-45)"/></g><circle r="1.8" fill="#fff"/></svg></div></div><div class="card a" style="left:208px;top:333px;height:83px;"><svg class="a" style="left:0;top:0" width="92" height="60" viewBox="0 0 92 60"><g transform="translate(10.6,-26.1) scale(0.54)">
<rect x="88" y="83" width="44.4" height="43" rx="3" fill="#e0e0e0"/>
<rect x="91" y="92.7" width="15.6" height="23.7" fill="#fff"/>
<rect x="124" y="75" width="3" height="58.4" fill="#8a8a8a"/>
<rect x="124" y="83" width="3" height="43" fill="#e0e0e0"/>
<path d="M131,86.5 H141 Q144,104 141,122 H131Z" fill="#b0b0b0"/>
<rect x="-13" y="77.4" width="103.8" height="55" rx="3" fill="#f22233"/>
</g></svg><div class="cl a" style="top:59px"></div><div class="cn a" style="top:61px">truck1</div><div class="a" style="left:75px;top:63.5px"><svg width="12" height="12" viewBox="-6 -6 12 12"><g fill="#c8c8c8"><circle r="4.2"/><rect x="-1.3" y="-6" width="2.6" height="12"/><rect x="-6" y="-1.3" width="12" height="2.6"/><rect x="-1.3" y="-6" width="2.6" height="12" transform="rotate(45)"/><rect x="-1.3" y="-6" width="2.6" height="12" transform="rotate(-45)"/></g><circle r="1.8" fill="#fff"/></svg></div></div><div class="card a" style="left:310px;top:333px;height:83px;"><svg class="a" style="left:0;top:0" width="92" height="60" viewBox="0 0 92 60"><g transform="translate(-0.3,-133.5) scale(0.86)">
<path d="M54,166 L61,174 M54,214 L61,206" stroke="#8a8a8a" stroke-width="2"/>
<rect x="5.5" y="170.3" width="97" height="39.2" rx="19.6" fill="#4a8ad0"/>
<path d="M25.1,170.3 A19.6,19.6 0 0 0 25.1,209.5 H21 V170.3Z" fill="#4580c4"/>
<rect x="21" y="173.6" width="32" height="32" rx="2" fill="#66a3e3"/>
<path d="M56.8,173.6 H64 Q73,189.9 64,206.2 H56.8Z" fill="#e6e6e6"/>
<rect x="72" y="170.3" width="2" height="39.2" fill="#3f7ec4"/>
<path d="M96.5,173.5 Q101,175 102.2,183 Q98,182 96.5,177Z" fill="#f3d98e"/>
<path d="M96.5,206.3 Q101,204.8 102.2,196.8 Q98,197.8 96.5,202.8Z" fill="#f3d98e"/>
</g></svg><div class="cl a" style="top:59px"></div><div class="cn a" style="top:61px">car2</div><div class="a" style="left:75px;top:63.5px"><svg width="12" height="12" viewBox="-6 -6 12 12"><g fill="#c8c8c8"><circle r="4.2"/><rect x="-1.3" y="-6" width="2.6" height="12"/><rect x="-6" y="-1.3" width="12" height="2.6"/><rect x="-1.3" y="-6" width="2.6" height="12" transform="rotate(45)"/><rect x="-1.3" y="-6" width="2.6" height="12" transform="rotate(-45)"/></g><circle r="1.8" fill="#fff"/></svg></div></div><div class="card a" style="left:5px;top:424px;height:85px;"><svg class="a" style="left:0;top:0" width="92" height="60" viewBox="0 0 92 60"><g transform="translate(-0.3,-133.5) scale(0.86)">
<path d="M54,166 L61,174 M54,214 L61,206" stroke="#8a8a8a" stroke-width="2"/>
<rect x="5.5" y="170.3" width="97" height="39.2" rx="19.6" fill="#4a8ad0"/>
<path d="M25.1,170.3 A19.6,19.6 0 0 0 25.1,209.5 H21 V170.3Z" fill="#4580c4"/>
<rect x="21" y="173.6" width="32" height="32" rx="2" fill="#66a3e3"/>
<path d="M56.8,173.6 H64 Q73,189.9 64,206.2 H56.8Z" fill="#e6e6e6"/>
<rect x="72" y="170.3" width="2" height="39.2" fill="#3f7ec4"/>
<path d="M96.5,173.5 Q101,175 102.2,183 Q98,182 96.5,177Z" fill="#f3d98e"/>
<path d="M96.5,206.3 Q101,204.8 102.2,196.8 Q98,197.8 96.5,202.8Z" fill="#f3d98e"/>
</g></svg><div class="cl a" style="top:59px"></div><div class="cn a" style="top:61px">car1</div><div class="a" style="left:75px;top:63.5px"><svg width="12" height="12" viewBox="-6 -6 12 12"><g fill="#c8c8c8"><circle r="4.2"/><rect x="-1.3" y="-6" width="2.6" height="12"/><rect x="-6" y="-1.3" width="12" height="2.6"/><rect x="-1.3" y="-6" width="2.6" height="12" transform="rotate(45)"/><rect x="-1.3" y="-6" width="2.6" height="12" transform="rotate(-45)"/></g><circle r="1.8" fill="#fff"/></svg></div></div><div class="card a" style="left:107px;top:424px;height:85px;"><svg class="a" style="left:0;top:0" width="92" height="60" viewBox="0 0 92 60"><g transform="translate(10.6,-26.1) scale(0.54)">
<rect x="88" y="83" width="44.4" height="43" rx="3" fill="#e0e0e0"/>
<rect x="91" y="92.7" width="15.6" height="23.7" fill="#fff"/>
<rect x="124" y="75" width="3" height="58.4" fill="#8a8a8a"/>
<rect x="124" y="83" width="3" height="43" fill="#e0e0e0"/>
<path d="M131,86.5 H141 Q144,104 141,122 H131Z" fill="#b0b0b0"/>
<rect x="-13" y="77.4" width="103.8" height="55" rx="3" fill="#f22233"/>
</g></svg><div class="cl a" style="top:59px"></div><div class="cn a" style="top:61px">truck2</div><div class="a" style="left:75px;top:63.5px"><svg width="12" height="12" viewBox="-6 -6 12 12"><g fill="#c8c8c8"><circle r="4.2"/><rect x="-1.3" y="-6" width="2.6" height="12"/><rect x="-6" y="-1.3" width="12" height="2.6"/><rect x="-1.3" y="-6" width="2.6" height="12" transform="rotate(45)"/><rect x="-1.3" y="-6" width="2.6" height="12" transform="rotate(-45)"/></g><circle r="1.8" fill="#fff"/></svg></div></div><div class="card a" style="left:208px;top:424px;height:85px;"><svg class="a" style="left:0;top:0" width="92" height="60" viewBox="0 0 92 60"><rect x="60.4" y="4.6" width="6.8" height="8" fill="#7a9a30"/><path d="M11.7,19.7 L46,3.4 L80.5,19.7Z" fill="#c44a4a"/>
<path d="M15.6,19.7 H76.7 L75.5,60 H16.8Z" fill="#6b8a2a"/><clipPath id="hclip"><path d="M15.6,19.7 H76.7 L75.5,60 H16.8Z"/></clipPath><g fill="#86a53a" clip-path="url(#hclip)"><circle cx="19" cy="36" r="7"/><circle cx="31" cy="33" r="4.5"/><circle cx="52" cy="29" r="5"/><circle cx="66" cy="37" r="5"/><circle cx="74" cy="31" r="4"/><circle cx="34" cy="49" r="5"/><circle cx="68" cy="56" r="6"/><circle cx="22" cy="24" r="2.5"/><circle cx="46" cy="23" r="2.5"/><circle cx="64" cy="24" r="2.2"/><circle cx="22" cy="60" r="3.5"/></g>
<g fill="#333"><rect x="22" y="27.6" width="10.8" height="7.6"/><rect x="61" y="27.6" width="11" height="7.6"/><rect x="22" y="44" width="10.8" height="7.8"/><rect x="61" y="44" width="11" height="7.8"/></g><path d="M39,41 H55 L54,60 H40Z" fill="#5a3a1e"/></svg><div class="cl a" style="top:59px"></div><div class="cn a" style="top:61px">home</div><div class="a" style="left:75px;top:63.5px"><svg width="12" height="12" viewBox="-6 -6 12 12"><g fill="#c8c8c8"><circle r="4.2"/><rect x="-1.3" y="-6" width="2.6" height="12"/><rect x="-6" y="-1.3" width="12" height="2.6"/><rect x="-1.3" y="-6" width="2.6" height="12" transform="rotate(45)"/><rect x="-1.3" y="-6" width="2.6" height="12" transform="rotate(-45)"/></g><circle r="1.8" fill="#fff"/></svg></div></div>
</div>
<script>
(function(){
var T={"t0": 205.5, "p1a": 289, "p1b": 277, "p1c": 289, "p1d": 61, "p2a": 274.6, "p2b": 184.5, "p2c": 278, "p2d": 290, "p2e": 38.5, "p3a": 256.6, "p3b": 285.4, "p3c": 239.8, "k1a": 179, "k1b": 185, "k1c": 187, "k1d": 165, "k2a": 196, "k2b": 240, "k2c": 185, "k3a": 151, "b0": 161.4, "b1": 59.5, "pv": 89.0, "nv": 105.5};
for(var k in T){var e=document.getElementById(k);if(!e)continue;var t=e.style.transform;e.style.transform='none';var w=e.getBoundingClientRect().width;if(w>0){e.style.transform='scaleX('+(T[k]/w).toFixed(4)+')';}else{e.style.transform=t;}}
var m=document.querySelectorAll('.mono');
for(var i=0;i<m.length;i++){var el=m[i];var fs=parseFloat(getComputedStyle(el).fontSize);var fw=getComputedStyle(el).fontWeight;var s=document.createElement('span');s.style.cssText='position:absolute;visibility:hidden;white-space:pre;font-family:"Liberation Mono",monospace;letter-spacing:0;font-size:'+fs+'px;font-weight:'+fw;s.textContent='xxxxxxxxxxxxxxxxxxxxxxxxxxxxxxxxxxxxxxxxxxxxxxxxxx';document.body.appendChild(s);var adv=s.getBoundingClientRect().width/50;document.body.removeChild(s);var d=fs*0.6-adv;if(Math.abs(d)>0.01)el.style.letterSpacing=d.toFixed(3)+'px';}
})();
</script>
</body></html>
